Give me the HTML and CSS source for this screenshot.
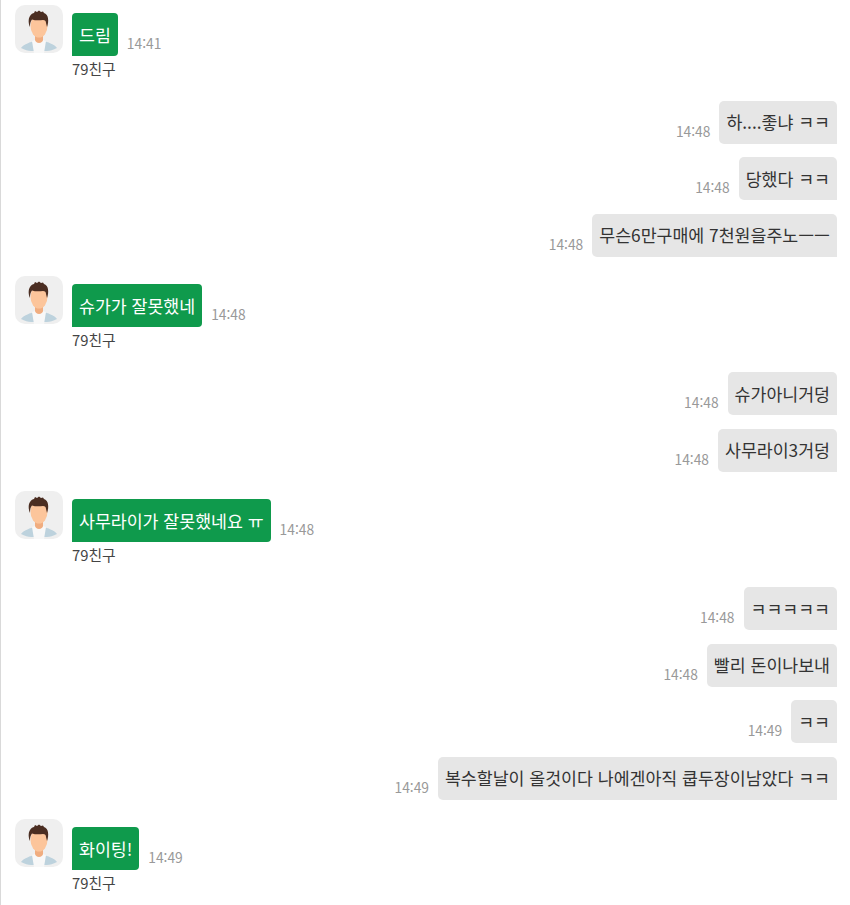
FILE: index.html
```html
<!DOCTYPE html>
<html lang="ko">
<head>
<meta charset="utf-8">
<title>채팅</title>
<link rel="stylesheet" href="styles.css">
</head>
<body>
<svg class="defs" width="0" height="0" aria-hidden="true">
  <symbol id="person" viewBox="0 0 48 48">
    <path d="M6 43c3-4 10-6 13-7h10c3 1 10 3 13 7-4 2-7 3-10 3H16c-3 0-6-1-10-3z" fill="#bdd2dd"/>
    <path d="M17 36l3-1 4 2 4-2 3 1 -2 12H19z" fill="#f8f8f8"/>
    <path d="M20 27h8v8c0 1-2 3-4 3s-4-2-4-3z" fill="#f0ad80"/>
    <ellipse cx="24" cy="21" rx="8.500" ry="11.500" fill="#fcc59b"/>
    <path d="M15 22c-1.500-3-2-8 0-11 1-2 3-3 4-3l1-2 2 1 2-1.500 2 1.500 2-.5 1 1.500c2 .5 4 3 4 5.500 .5 2.500 0 6-1 8.500l-1-4c0-2-1-3-3-3-4 .5-8 .5-11-.5-1.500 2-2 4-2 7z" fill="#4b2e22"/>
  </symbol>
</svg>
<main class="chat">
  <div class="row left"><div class="avatar"><svg class="face"><use href="#person"/></svg></div><div class="body"><div class="line"><div class="bubble green">드림</div><span class="time">14:41</span></div><div class="name">79친구</div></div></div>
  <div class="row right"><span class="time">14:48</span><div class="bubble gray">하....좋냐 ㅋㅋ</div></div>
  <div class="row right"><span class="time">14:48</span><div class="bubble gray">당했다 ㅋㅋ</div></div>
  <div class="row right end"><span class="time">14:48</span><div class="bubble gray">무슨6만구매에 7천원을주노ㅡㅡ</div></div>
  <div class="row left"><div class="avatar"><svg class="face"><use href="#person"/></svg></div><div class="body"><div class="line"><div class="bubble green">슈가가 잘못했네</div><span class="time">14:48</span></div><div class="name">79친구</div></div></div>
  <div class="row right"><span class="time">14:48</span><div class="bubble gray">슈가아니거덩</div></div>
  <div class="row right end"><span class="time">14:48</span><div class="bubble gray">사무라이3거덩</div></div>
  <div class="row left"><div class="avatar"><svg class="face"><use href="#person"/></svg></div><div class="body"><div class="line"><div class="bubble green">사무라이가 잘못했네요 ㅠ</div><span class="time">14:48</span></div><div class="name">79친구</div></div></div>
  <div class="row right"><span class="time">14:48</span><div class="bubble gray">ㅋㅋㅋㅋㅋ</div></div>
  <div class="row right"><span class="time">14:48</span><div class="bubble gray">빨리 돈이나보내</div></div>
  <div class="row right"><span class="time">14:49</span><div class="bubble gray">ㅋㅋ</div></div>
  <div class="row right end"><span class="time">14:49</span><div class="bubble gray">복수할날이 올것이다 나에겐아직 쿱두장이남았다 ㅋㅋ</div></div>
  <div class="row left"><div class="avatar"><svg class="face"><use href="#person"/></svg></div><div class="body"><div class="line"><div class="bubble green">화이팅!</div><span class="time">14:49</span></div><div class="name">79친구</div></div></div>
</main>
</body>
</html>
```

FILE: styles.css
```css
html, body {
  margin: 0;
  padding: 0;
  background: #fff;
}
body {
  height: 905px;
  overflow: hidden;
  border-left: 1px solid #d9d9d9;
  box-sizing: border-box;
  font-family: "Noto Sans CJK KR", "Noto Sans", sans-serif;
}
.defs {
  position: absolute;
}
.chat {
  display: flex;
  flex-direction: column;
  padding: 5px 13px 0 14px;
}
.row {
  display: flex;
}
.row.left {
  margin-bottom: 20.700px;
  gap: 9px;
  height: 75px;
}
.row.right {
  justify-content: flex-end;
  align-items: flex-end;
  gap: 9px;
  margin-bottom: 13.500px;
}
.row.right.end {
  margin-bottom: 19.800px;
}
.avatar {
  width: 48px;
  height: 48px;
  border-radius: 10px;
  background: #efefef;
  overflow: hidden;
  flex: none;
}
.face {
  display: block;
  width: 48px;
  height: 48px;
}
.body {
  padding-top: 8px;
}
.line {
  display: flex;
  align-items: flex-end;
  gap: 9px;
}
.bubble {
  height: 43px;
  box-sizing: border-box;
  padding: 0 7px 1px;
  display: flex;
  align-items: center;
  font-size: 17.300px;
  white-space: nowrap;
}
.green {
  background: #0f9a4c;
  color: #fff;
  border-radius: 4px 4px 4px 0;
}
.gray {
  background: #e6e6e6;
  color: #333;
  border-radius: 5px 5px 0 5px;
}
.time {
  font-family: "Noto Sans CJK KR", sans-serif;
  font-size: 13.800px;
  line-height: 18px;
  color: #999;
  padding-bottom: 4px;
}
.name {
  margin-top: 2px;
  font-size: 14.800px;
  line-height: 21px;
  color: #444;
}
```
